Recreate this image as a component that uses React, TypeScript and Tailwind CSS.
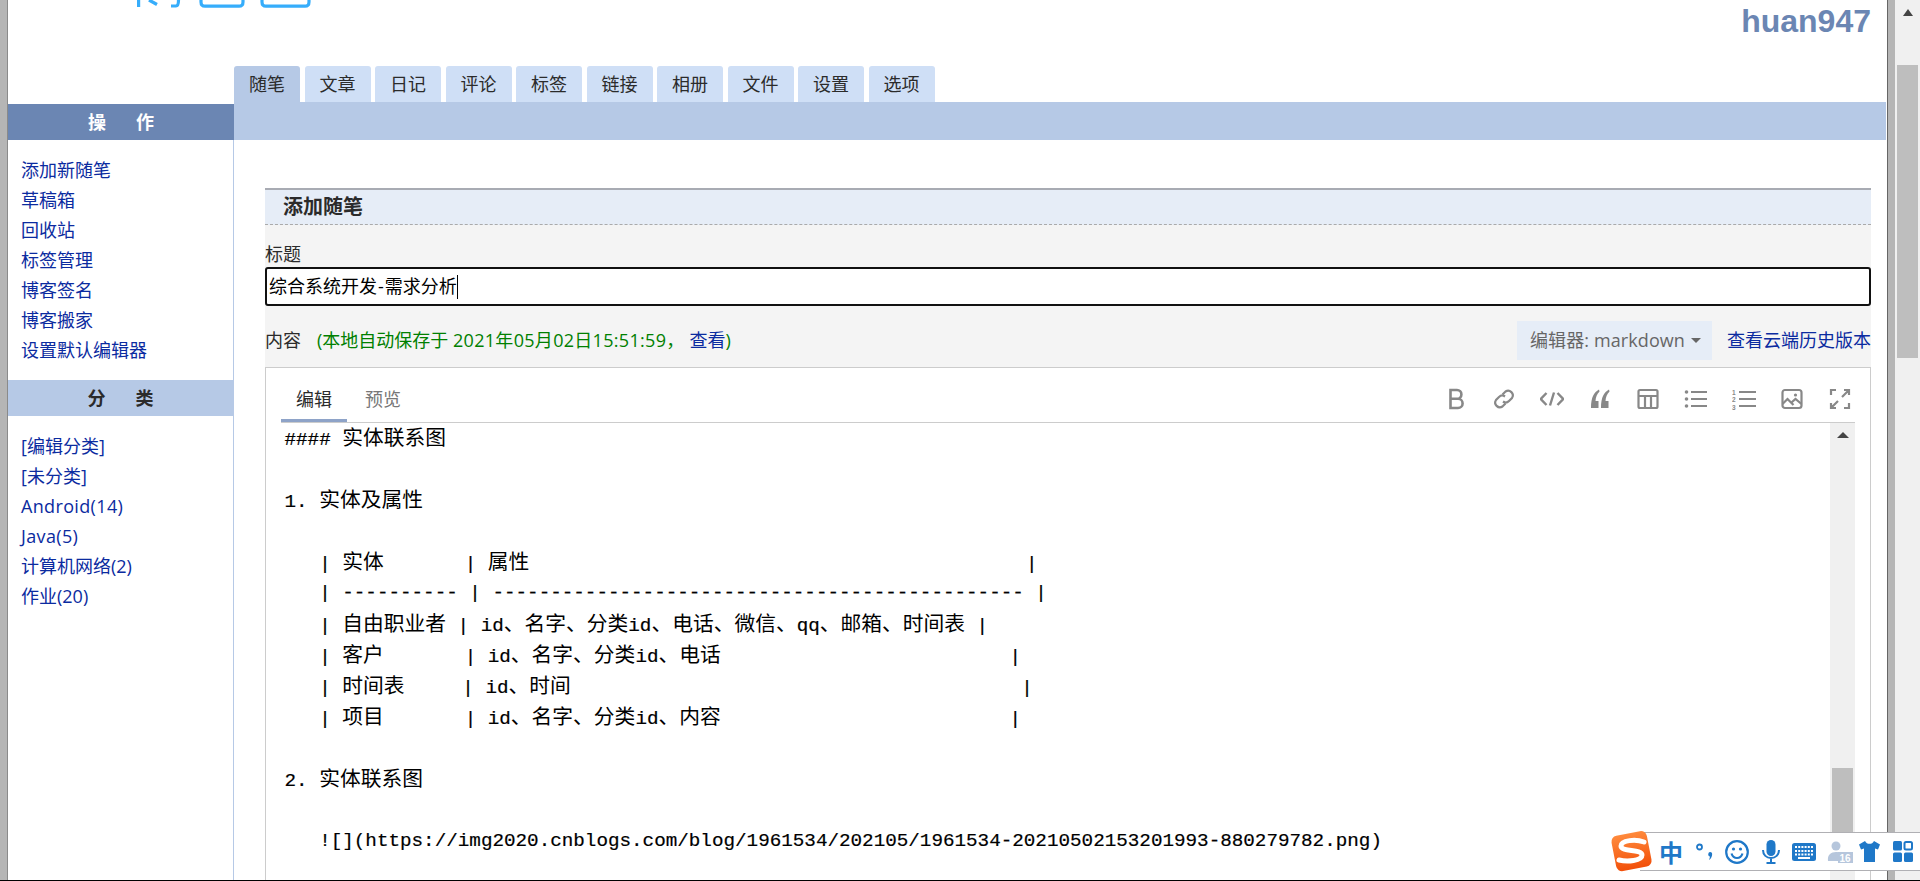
import React from "react";

const tabs = ["随笔", "文章", "日记", "评论", "标签", "链接", "相册", "文件", "设置", "选项"];
const ops = ["添加新随笔", "草稿箱", "回收站", "标签管理", "博客签名", "博客搬家", "设置默认编辑器"];
const cats = ["[编辑分类]", "[未分类]", "Android(14)", "Java(5)", "计算机网络(2)", "作业(20)"];

const lines = [
  "#### 实体联系图",
  "",
  "1. 实体及属性",
  "",
  "   | 实体       | 属性" + " ".repeat(43) + "|",
  "   | ---------- | " + "-".repeat(46) + " |",
  "   | 自由职业者 | id、名字、分类id、电话、微信、qq、邮箱、时间表 |",
  "   | 客户       | id、名字、分类id、电话" + " ".repeat(25) + "|",
  "   | 时间表     | id、时间" + " ".repeat(39) + "|",
  "   | 项目       | id、名字、分类id、内容" + " ".repeat(25) + "|",
  "",
  "2. 实体联系图",
  "",
  "   ![](https://img2020.cnblogs.com/blog/1961534/202105/1961534-20210502153201993-880279782.png)",
  "",
];

function CodeLine({ text }: { text: string }) {
  const parts = text.split(/([\u3000-\u9fff\uff00-\uffef]+)/);
  return (
    <div className="h-[31px] leading-[31px] whitespace-pre text-black">
      {parts.map((p, i) =>
        i % 2 === 1 ? (
          <span key={i} className="text-[20.75px] font-['Noto_Sans_CJK_SC',sans-serif]">{p}</span>
        ) : (
          <span key={i} className="text-[19.25px] font-['Liberation_Mono',monospace] [-webkit-text-stroke:0.2px_black]">{p}</span>
        )
      )}
    </div>
  );
}

function Icon({ children }: { children: React.ReactNode }) {
  return (
    <svg viewBox="0 0 24 24" className="w-6 h-6 text-[#888888]" fill="none" stroke="currentColor" strokeWidth="2.200">
      {children}
    </svg>
  );
}

const toolbarIcons = [
  <Icon key="b"><path d="M6.500 3h6.500a4.400 4.400 0 0 1 0 8.800H6.500zM6.500 11.800h7.500a4.600 4.600 0 0 1 0 9.200H6.500z" strokeWidth="2.600" /></Icon>,
  <Icon key="l">
    <path d="M10.500 7.500l3-3a4.700 4.700 0 0 1 6.500 6.500l-3 3a4.700 4.700 0 0 1-6 .5" />
    <path d="M13.500 16.500l-3 3a4.700 4.700 0 0 1-6.500-6.500l3-3a4.700 4.700 0 0 1 6-.5" />
  </Icon>,
  <Icon key="c"><path d="M6.500 6L.8 12l5.700 6M17.500 6l5.700 6-5.700 6M14 5.500l-4 13" strokeWidth="2.400" /></Icon>,
  <Icon key="q">
    <path fill="currentColor" stroke="none" d="M11 2.500C6 5.500 3 10 3 21h7.500v-7H7.500C7.700 10 9 7.300 11.500 4.500zM21 2.500C16 5.500 13 10 13 21h7.500v-7h-3c.2-4 1.500-6.700 4-9.500z" />
  </Icon>,
  <Icon key="t">
    <rect x="2.500" y="3" width="19" height="18" rx="1.500" />
    <path d="M2.500 9h19M9 9v12M15 9v12" />
  </Icon>,
  <Icon key="u">
    <circle cx="2.500" cy="5" r="1.800" fill="currentColor" stroke="none" />
    <circle cx="2.500" cy="12" r="1.800" fill="currentColor" stroke="none" />
    <circle cx="2.500" cy="19" r="1.800" fill="currentColor" stroke="none" />
    <path d="M7 5h16M7 12h16M7 19h16" />
  </Icon>,
  <Icon key="o">
    <text x="0" y="8" fontSize="6.500" fontWeight="700" fill="currentColor" stroke="none" fontFamily="Liberation Sans">1</text>
    <text x="0" y="15" fontSize="6.500" fontWeight="700" fill="currentColor" stroke="none" fontFamily="Liberation Sans">2</text>
    <text x="0" y="22.500" fontSize="6.500" fontWeight="700" fill="currentColor" stroke="none" fontFamily="Liberation Sans">3</text>
    <path d="M7 5h17M7 12h17M7 19h17" />
  </Icon>,
  <Icon key="i">
    <rect x="2.500" y="3" width="19" height="18" rx="2.500" />
    <path d="M2.500 17l5-5 6 6M12 15l3.500-3 6 5" />
    <circle cx="15.500" cy="8" r="1.600" fill="currentColor" stroke="none" />
  </Icon>,
  <Icon key="f">
    <path d="M3 8V3h5M16 3h5v5M21 16v5h-5M8 21H3v-5M4 20l6-6M20 4l-6 6" />
  </Icon>,
];

function Logo() {
  return (
    <svg viewBox="0 0 180 8" className="w-[180px] h-2 text-[#36adfb] ml-[129px]" fill="none" stroke="currentColor" strokeWidth="3.200">
      <path d="M1.600 0v7M12 0l8 4.500M34 6h5c2 0 2.500-2 2.500-6" />
      <path d="M64 0v2c0 2.500 1.500 4.200 4 4.200h34c2.500 0 4-1.700 4-4.200V0" />
      <path d="M125 0v2c0 2.500 1.500 4.200 4 4.200h39c2.500 0 4-1.700 4-4.200V0" />
    </svg>
  );
}

function SogouBar() {
  return (
    <div className="absolute right-0 bottom-[10px] w-[280px] h-[39px] bg-white border-y border-[#b0b0b4] flex items-center text-[#1f78c8]">
      <svg viewBox="0 0 44 44" className="absolute -left-[30px] -top-[4px] w-[44px] h-[44px]">
        <defs>
          <linearGradient id="sg" x1="0" y1="0" x2="0" y2="1">
            <stop offset="0" stopColor="#ff8a3c" />
            <stop offset="1" stopColor="#f2500a" />
          </linearGradient>
        </defs>
        <rect x="3.500" y="4" width="36" height="36" rx="6" fill="url(#sg)" transform="rotate(-11 22 22)" />
        <path d="M34 13C26 10 11 11 11 17c0 6 21 3 21 9 0 6-15 7-23 5" fill="none" stroke="#ffffff" strokeWidth="5" strokeLinecap="round" />
      </svg>
      <span className="ml-[19px] w-6 text-center text-[24px] leading-6 font-bold font-['Noto_Sans_CJK_SC',sans-serif]">中</span>
      <svg viewBox="0 0 18 18" className="ml-[13px] w-[18px] h-[18px]" fill="none" stroke="currentColor">
        <circle cx="3.500" cy="4" r="2.500" strokeWidth="1.800" />
        <path d="M14 9c2 0 2.500 1.500 2 3.500-.5 2-1.500 3.500-3 4.500 .5-1.500 1-2.500.8-3.500-1.300-.5-1.800-1.400-1.500-2.500 .2-1.200 .8-2 1.700-2z" fill="currentColor" stroke="none" />
      </svg>
      <svg viewBox="0 0 24 24" className="ml-[11px] w-6 h-6" fill="none" stroke="currentColor" strokeWidth="2.200">
        <circle cx="12" cy="12" r="10.800" />
        <circle cx="8.500" cy="9" r="1.600" fill="currentColor" stroke="none" />
        <circle cx="15.500" cy="9" r="1.600" fill="currentColor" stroke="none" />
        <path d="M6.500 13.500c1 3 3 4.500 5.500 4.500s4.500-1.500 5.500-4.500" />
      </svg>
      <svg viewBox="0 0 18 24" className="ml-[13px] w-[18px] h-6" fill="none" stroke="currentColor" strokeWidth="2">
        <rect x="4.500" y="0" width="9" height="16" rx="4.500" fill="currentColor" stroke="none" />
        <path d="M1 10c0 5 3.500 8 8 8s8-3 8-8M9 18v5M4.500 23h9" />
      </svg>
      <svg viewBox="0 0 24 18" className="ml-3 w-6 h-[18px]">
        <rect x="0" y="0" width="24" height="18" rx="2.500" fill="currentColor" />
        <path d="M3 4h18M3 8h18M3 11.500h18" stroke="#ffffff" strokeWidth="2" strokeDasharray="2 1.200" />
        <path d="M6 15h12" stroke="#ffffff" strokeWidth="2" />
      </svg>
      <svg viewBox="0 0 26 22" className="ml-[11px] w-[26px] h-[22px]">
        <circle cx="9" cy="5" r="4.500" fill="#b6c6dc" />
        <path d="M1 20c-1-6 3-9 8-9 2 0 3.500 .5 4.500 1.500V20z" fill="#b6c6dc" />
        <rect x="11" y="11" width="15" height="11" fill="#b6c6dc" />
        <text x="12.500" y="20.500" fontSize="10" fontWeight="700" fill="#ffffff" fontFamily="Liberation Sans">16</text>
      </svg>
      <svg viewBox="0 0 21 21" className="ml-[6px] w-[21px] h-[21px]">
        <path d="M6 0c1 2 2.500 2.800 4.500 2.800S14 2 15 0l6 3.500-2 5-3-1V21H5V7.500l-3 1-2-5z" fill="currentColor" />
      </svg>
      <svg viewBox="0 0 20 21" className="ml-[13px] w-5 h-[21px]">
        <rect x="0" y="0" width="9" height="9.500" rx="1.500" fill="currentColor" />
        <rect x="11.500" y="1" width="7.500" height="7.500" rx="1.500" fill="none" stroke="currentColor" strokeWidth="2" />
        <rect x="0" y="11.500" width="9" height="9.500" rx="1.500" fill="currentColor" />
        <rect x="11" y="11.500" width="9" height="9.500" rx="1.500" fill="currentColor" />
      </svg>
    </div>
  );
}

export default function App() {
  return (
    <div className="relative flex w-full h-[881px] overflow-hidden bg-white text-[18px] text-[#2b2b2b] font-['Open_Sans','Noto_Sans_CJK_SC',sans-serif]">
      <div className="w-2 shrink-0 bg-[#b5b5b5] border-r border-[#8a8a8a]" />

      <div className="flex-1 min-w-0 flex flex-col">
        <header className="relative h-[66px] shrink-0 flex justify-between items-start">
          <Logo />
          <div className="mr-[16px] mt-[3px] text-[32px] leading-[36px] font-bold text-[#6b86b3] font-['Liberation_Sans',sans-serif]">huan947</div>
        </header>

        <div className="flex flex-1 min-h-0">
          <aside className="w-[226px] shrink-0 pt-[38px] flex flex-col">
            <div className="h-9 shrink-0 bg-[#6b86b3] text-white font-bold flex items-center justify-center gap-[30px]">
              <span>操</span><span>作</span>
            </div>
            <div className="flex-1 border-r border-[#b6c9e6] flex flex-col">
              <ul className="pt-[15px] pl-[13px]">
                {ops.map((t) => (
                  <li key={t} className="h-[30px] leading-[30px] text-[#0b2ba0]">{t}</li>
                ))}
              </ul>
              <div className="mt-[15px] h-9 bg-[#b6c9e6] font-bold flex items-center justify-center gap-[30px]">
                <span>分</span><span>类</span>
              </div>
              <ul className="pt-[15px] pl-[13px]">
                {cats.map((t) => (
                  <li key={t} className={/^[A-Z]/.test(t) ? "h-[30px] leading-[30px] text-[#0b2ba0] tracking-[0.35px]" : "h-[30px] leading-[30px] text-[#0b2ba0]"}>{t}</li>
                ))}
              </ul>
            </div>
          </aside>

          <main className="flex-1 min-w-0 flex flex-col pr-px">
            <nav className="h-9 shrink-0 flex gap-[4.5px]">
              {tabs.map((t, i) => (
                <div
                  key={t}
                  className={
                    i === 0
                      ? "w-[66px] h-9 rounded-t-[3px] bg-[#b6c9e6] flex items-center justify-center"
                      : "w-[66px] h-9 rounded-t-[3px] bg-[#cfdff6] flex items-center justify-center"
                  }
                >
                  {t}
                </div>
              ))}
            </nav>
            <div className="h-[38px] shrink-0 bg-[#b6c9e6]" />

            <section className="mt-12 ml-[31px] mr-[15px] flex-1 min-h-0 flex flex-col bg-[#f4f4f4]">
              <h2 className="h-[37px] shrink-0 bg-[#e6edf7] border-t-2 border-[#a8abb3] border-b border-b-[#aaaaaa] [border-bottom-style:dashed] pl-[18px] flex items-center text-[20px] font-bold">
                添加随笔
              </h2>
              <div className="pt-[15px] h-[42px] shrink-0 leading-[28px]">标题</div>
              <div className="h-[39px] shrink-0 bg-white border-2 border-[#111111] rounded-[3px] flex items-center pl-[2px] text-black">
                <span>综合系统开发<span className="px-px">-</span>需求分析</span>
                <span className="w-px h-6 bg-black" />
              </div>
              <div className="mt-[15px] h-[39px] shrink-0 flex items-center justify-between">
                <div>
                  <span>内容</span>
                  <span className="ml-[16px] text-[#008000]">
                    (本地自动保存于 <span className="tracking-[0.3px]">2021年05月02日15:51:59， </span><span className="text-[#0b2ba0]">查看</span>)
                  </span>
                </div>
                <div className="flex items-center gap-[15px]">
                  <div className="w-[195px] h-[39px] bg-[#e6edf7] text-[#666666] pl-[13px] flex items-center">
                    <span className="tracking-[0.1px]">编辑器: markdown</span>
                    <span className="ml-[6px] border-x-[5px] border-x-transparent border-t-[5px] border-t-[#666666]" />
                  </div>
                  <span className="text-[#0b2ba0]">查看云端历史版本</span>
                </div>
              </div>

              <div className="mt-[7px] flex-1 min-h-0 bg-white border border-[#cccccc] pl-[15px] pr-[15px] flex flex-col">
                <div className="h-[55px] shrink-0 border-b border-[#cccccc] flex items-end justify-between">
                  <div className="flex">
                    <div className="w-[66px] h-[51px] border-b-[3px] border-[#8ea3c8] text-center leading-[54px] font-['Noto_Sans_CJK_SC',sans-serif]">编辑</div>
                    <div className="w-[72px] h-[51px] text-center leading-[54px] text-[#777777] font-['Noto_Sans_CJK_SC',sans-serif]">预览</div>
                  </div>
                  <div className="flex gap-6 pr-[3px] pb-[11px]">{toolbarIcons}</div>
                </div>
                <div className="flex flex-1 min-h-0">
                  <div className="flex-1 min-w-0 pl-[3.5px] -mt-[2px] overflow-hidden">
                    {lines.map((l, i) => (
                      <CodeLine key={i} text={l} />
                    ))}
                  </div>
                  <div className="w-[25px] shrink-0 bg-[#f0f0f0] flex flex-col items-center">
                    <span className="mt-[9px] border-x-[6px] border-x-transparent border-b-[6px] border-b-[#444444]" />
                    <div className="mt-[330px] w-[21px] h-[85px] bg-[#bebebe]" />
                  </div>
                </div>
              </div>
            </section>
          </main>
        </div>
      </div>

      <div className="w-2 shrink-0 bg-[#b5b5b5] border-l border-[#666666]" />
      <div className="w-[25px] shrink-0 bg-[#f0f0f0] flex flex-col items-center">
        <span className="mt-[9px] border-x-[5px] border-x-transparent border-b-[7px] border-b-[#444444]" />
        <div className="mt-[49px] w-[21px] h-[293px] bg-[#bebebe]" />
      </div>

      <SogouBar />
      <div className="absolute left-0 right-0 bottom-0 h-px bg-black" />
    </div>
  );
}
